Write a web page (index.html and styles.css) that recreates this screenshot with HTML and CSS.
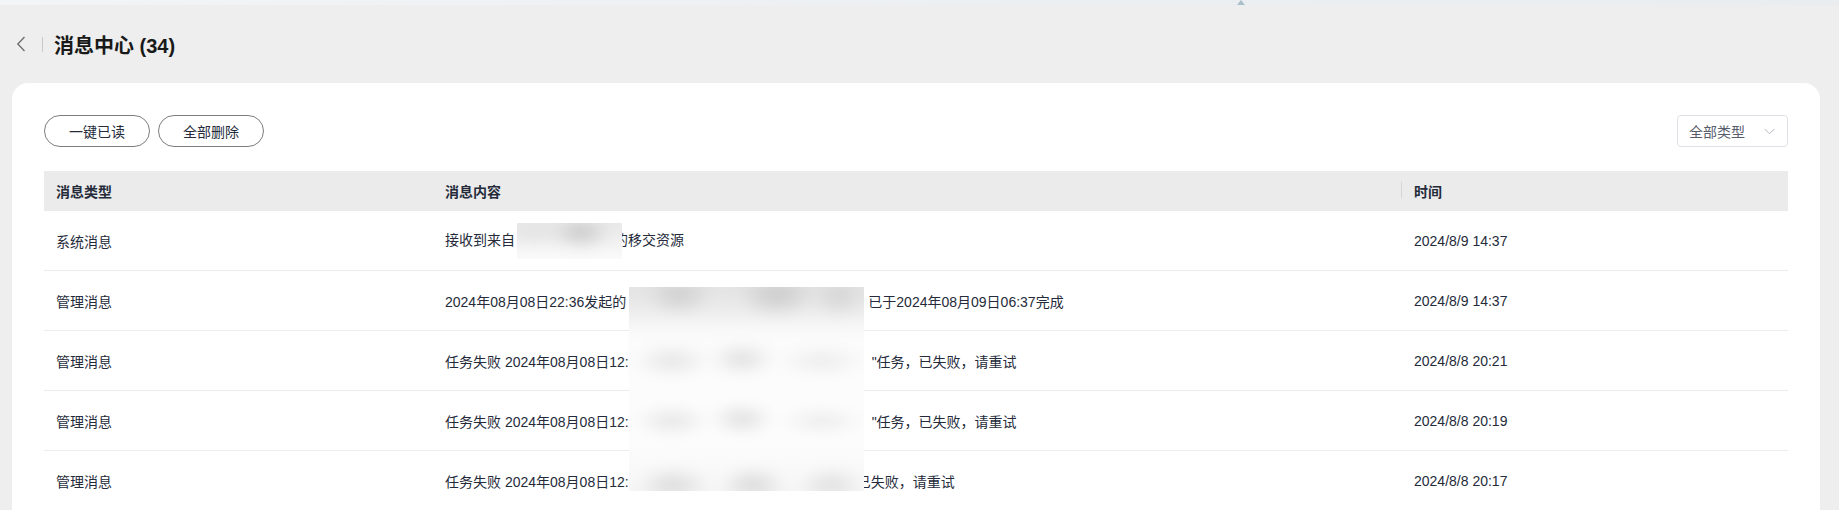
FILE: index.html
```html
<!DOCTYPE html>
<html lang="zh-CN">
<head>
    <meta charset="UTF-8">
    <meta name="viewport" content="width=device-width, initial-scale=1.0">
    <title>消息中心</title>
    <link rel="stylesheet" href="styles.css">
</head>
<body>
    <div class="topbar"><span class="topbar-mark"></span></div>

    <div class="page-head">
        <button type="button" class="back-btn" aria-label="返回">
            <svg width="10" height="16" viewBox="0 0 10 16">
                <path d="M8.5 1 L1.8 8 L8.5 15" fill="none" stroke="#6b6b6b" stroke-width="1.3"/>
            </svg>
        </button>
        <span class="head-divider"></span>
        <h1>消息中心 (34)</h1>
    </div>

    <div class="card">
        <div class="toolbar">
            <div class="actions">
                <button type="button" class="pill-btn">一键已读</button>
                <button type="button" class="pill-btn">全部删除</button>
            </div>
            <div class="type-select">
                <span>全部类型</span>
                <svg width="11" height="7" viewBox="0 0 11 7">
                    <path d="M0.5 0.8 L5.5 5.8 L10.5 0.8" fill="none" stroke="#b5b8bf" stroke-width="1"/>
                </svg>
            </div>
        </div>

        <div class="msg-table">
            <div class="msg-row msg-head">
                <div class="cell">消息类型</div>
                <div class="cell">消息内容</div>
                <div class="cell col-time">时间</div>
            </div>

            <div class="msg-row">
                <div class="cell">系统消息</div>
                <div class="cell">接收到来自<span class="redact-sm"></span>的移交资源</div>
                <div class="cell">2024/8/9 14:37</div>
            </div>
            <div class="msg-row">
                <div class="cell">管理消息</div>
                <div class="cell">2024年08月08日22:36发起的<span class="gap" style="width: 242px"></span>已于2024年08月09日06:37完成</div>
                <div class="cell">2024/8/9 14:37</div>
            </div>
            <div class="msg-row">
                <div class="cell">管理消息</div>
                <div class="cell">任务失败 2024年08月08日12:<span class="gap" style="width: 243px"></span>"任务，已失败，请重试</div>
                <div class="cell">2024/8/8 20:21</div>
            </div>
            <div class="msg-row">
                <div class="cell">管理消息</div>
                <div class="cell">任务失败 2024年08月08日12:<span class="gap" style="width: 243px"></span>"任务，已失败，请重试</div>
                <div class="cell">2024/8/8 20:19</div>
            </div>
            <div class="msg-row">
                <div class="cell">管理消息</div>
                <div class="cell">任务失败 2024年08月08日12:<span class="gap" style="width: 228px"></span>已失败，请重试</div>
                <div class="cell">2024/8/8 20:17</div>
            </div>

            <!-- redacted area over rows 2-5 -->
            <div class="redact-lg"></div>
        </div>
    </div>
</body>
</html>
```

FILE: styles.css
```css
body {
    margin: 0;
    background-color: #eeeeee;
    font-family: "Liberation Sans", "Noto Sans CJK SC", sans-serif;
    color: #252b3a;
    font-size: 14px;
    overflow: hidden;
}

.topbar {
    height: 5px;
    background: linear-gradient(to right, #f2f4f6, #eceff2 60%, #e9edf0);
    display: flex;
}

.topbar-mark {
    margin-left: 1237px;
    width: 0;
    height: 0;
    border-left: 4px solid transparent;
    border-right: 4px solid transparent;
    border-bottom: 5px solid #a9bfca;
}

.page-head {
    height: 78px;
    display: flex;
    align-items: center;
    padding-left: 16px;
}

.back-btn {
    background: none;
    border: none;
    padding: 0;
    width: 10px;
    height: 16px;
    display: flex;
    cursor: pointer;
}

.head-divider {
    width: 1px;
    height: 15px;
    background-color: #c8c8c8;
    margin-left: 16px;
    margin-right: 11px;
}

h1 {
    margin: 0;
    font-size: 20px;
    font-weight: bold;
    color: #191919;
}

.card {
    background-color: #fff;
    margin: 0 19px 0 12px;
    border-radius: 16px 16px 0 0;
    padding: 32px 32px 40px;
    min-height: 460px;
}

.toolbar {
    display: flex;
    justify-content: space-between;
    align-items: center;
    height: 32px;
    margin-bottom: 24px;
}

.actions {
    display: flex;
    gap: 8px;
}

.pill-btn {
    height: 32px;
    width: 106px;
    box-sizing: border-box;
    border: 1px solid #7d7d7d;
    border-radius: 16px;
    background-color: #fff;
    color: #252b3a;
    font-family: inherit;
    font-size: 14px;
    padding: 0;
    cursor: pointer;
}

.type-select {
    width: 111px;
    height: 32px;
    box-sizing: border-box;
    border: 1px solid #dfe1e6;
    border-radius: 4px;
    display: flex;
    align-items: center;
    justify-content: space-between;
    padding: 0 12px 0 11px;
    color: #575d6c;
}

.msg-table {
    position: relative;
}

.msg-row {
    display: grid;
    grid-template-columns: 389px 1fr 386px;
    height: 60px;
    box-sizing: border-box;
    border-bottom: 1px solid #ebebf0;
    align-items: center;
    white-space: nowrap;
}

.msg-head {
    height: 40px;
    background-color: #ebebeb;
    border-bottom: none;
    font-weight: bold;
}

.cell {
    padding: 0 12px;
}

.col-time {
    position: relative;
}

.col-time::before {
    content: "";
    position: absolute;
    left: -1px;
    top: 1px;
    width: 1px;
    height: 16px;
    background-color: #d6d6d6;
}

.gap {
    display: inline-block;
}

/* blurred redactions */
.redact-sm,
.redact-lg {
    overflow: hidden;
    z-index: 1;
}

.redact-sm {
    display: inline-block;
    position: relative;
    width: 105px;
    height: 36px;
    margin: 0 -8px 0 2px;
    vertical-align: -14px;
    background-color: #f7f7f7;
}

.redact-sm::before,
.redact-lg::before {
    content: "";
    position: absolute;
    inset: -12px;
    filter: blur(7px);
}

.redact-sm::before {
    background:
        radial-gradient(ellipse 30px 16px at 76px 22px, #c4c4c4, rgba(220, 220, 220, 0)),
        radial-gradient(ellipse 40px 14px at 30px 22px, #e2e2e2, rgba(220, 220, 220, 0)),
        linear-gradient(to bottom, #e8e8e8 12px, #efefef 28px, #fcfcfc 48px);
}

.redact-lg {
    position: absolute;
    left: 585px;
    top: 116px;
    width: 235px;
    height: 204px;
    background-color: #fbfbfb;
}

.redact-lg::before {
    background:
        radial-gradient(ellipse 34px 20px at 62px 20px, #cdcdcd, rgba(220, 220, 220, 0)),
        radial-gradient(ellipse 40px 22px at 160px 20px, #c9c9c9, rgba(220, 220, 220, 0)),
        radial-gradient(ellipse 28px 20px at 222px 22px, #d3d3d3, rgba(220, 220, 220, 0)),
        radial-gradient(ellipse 40px 16px at 55px 86px, #e2e2e2, rgba(240, 240, 240, 0)),
        radial-gradient(ellipse 34px 16px at 125px 84px, #dcdcdc, rgba(240, 240, 240, 0)),
        radial-gradient(ellipse 46px 14px at 205px 86px, #e9e9e9, rgba(240, 240, 240, 0)),
        radial-gradient(ellipse 40px 16px at 55px 146px, #e3e3e3, rgba(240, 240, 240, 0)),
        radial-gradient(ellipse 34px 16px at 125px 144px, #dcdcdc, rgba(240, 240, 240, 0)),
        radial-gradient(ellipse 46px 14px at 205px 146px, #e9e9e9, rgba(240, 240, 240, 0)),
        radial-gradient(ellipse 38px 18px at 56px 210px, #d8d8d8, rgba(240, 240, 240, 0)),
        radial-gradient(ellipse 34px 18px at 136px 210px, #d6d6d6, rgba(240, 240, 240, 0)),
        radial-gradient(ellipse 34px 18px at 214px 210px, #dddddd, rgba(240, 240, 240, 0)),
        linear-gradient(to bottom, #e3e3e3 12px, #ebebeb 34px, #fbfbfb 58px, #fdfdfd 160px, #f5f5f5 228px);
}
```
